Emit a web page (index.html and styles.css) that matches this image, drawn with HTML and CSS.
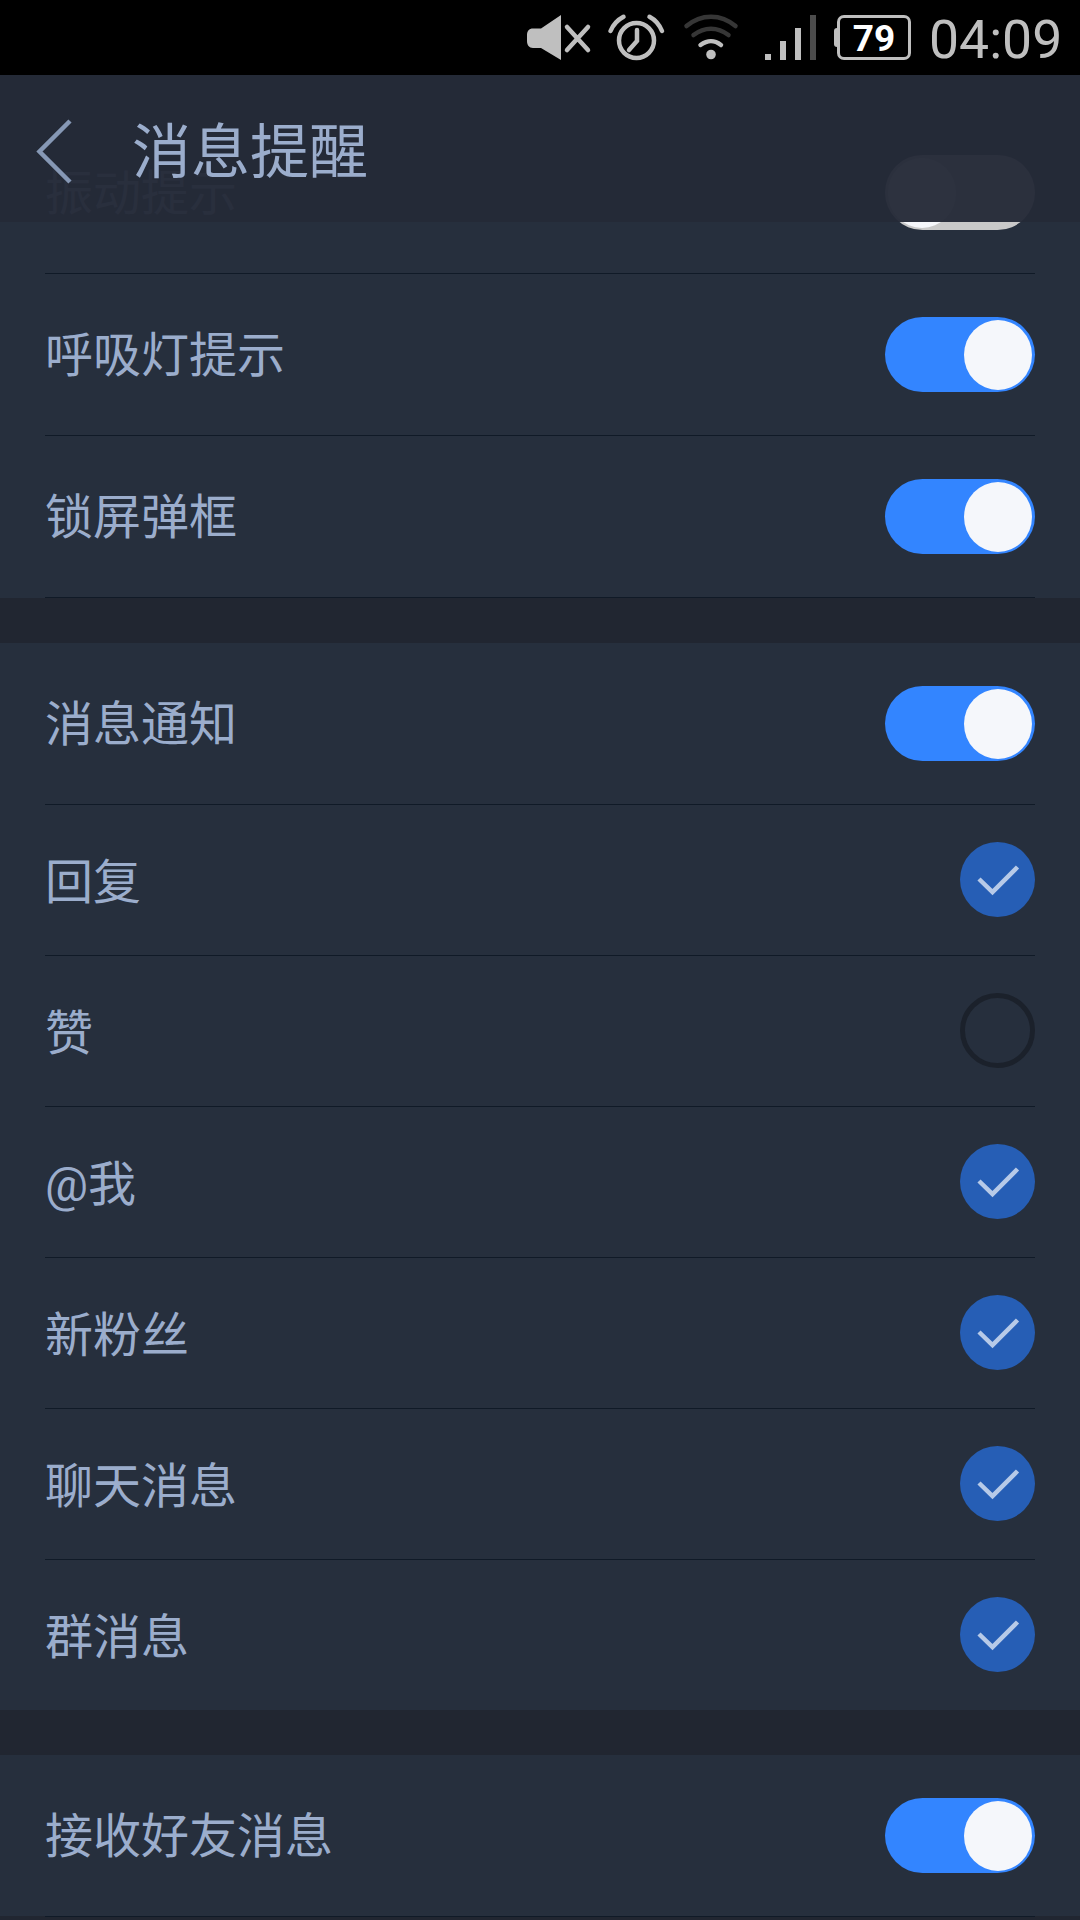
FILE: index.html
```
<!DOCTYPE html>
<html lang="zh-CN">
<head>
  <meta charset="utf-8">
  <title>消息提醒</title>
  <link rel="stylesheet" href="styles.css">
</head>
<body>
  <div class="status-bar">
    <svg class="status-icons" width="315" height="75" viewBox="0 0 315 75">
      <!-- muted -->
      <path class="fill" d="M23 28.500H31L51 15V60L31 48H23C19 48 17 45 17 41V35C17 31 19 28.500 23 28.500Z"/>
      <path class="line w4" d="M57 27L78 50M78 27L57 50"/>
      <!-- alarm -->
      <circle class="line w4" cx="126.500" cy="40.500" r="17.500"/>
      <path class="line w4" d="M127 30V41L119 50"/>
      <path class="line w4" d="M100.500 31C103 25 107.500 20 113.500 16.800M139.500 16.800C145.500 20 149.500 25 152 31"/>
      <!-- wifi -->
      <path class="line w4 dim" d="M176.500 26C191 13.500 211 13.500 225.500 26"/>
      <path class="line w4 dim" d="M183.500 35C194.500 26.500 207.500 26.500 218.500 35"/>
      <path class="line w4" d="M190.500 45C198 39.800 204 39.800 211 45"/>
      <circle class="fill" cx="201" cy="54.500" r="4.800"/>
      <!-- signal -->
      <path class="fill" d="M255 54H261V60H255ZM270 41H276V60H270ZM285 28H291V60H285Z"/>
      <path class="weak" d="M300 15H306V60H300Z"/>
    </svg>
    <div class="battery">79</div>
    <div class="clock">04:09</div>
  </div>

  <div class="screen">
    <header class="title-bar">
      <svg class="back" width="40" height="70" viewBox="0 0 40 70">
        <path d="M34 3L3.500 33.500L34 64"/>
      </svg>
      <h1>消息提醒</h1>
    </header>

    <main>
      <section class="group scrolled">
        <div class="row"><span>振动提示</span><i class="switch"></i></div>
        <div class="row"><span>呼吸灯提示</span><i class="switch on"></i></div>
        <div class="row"><span>锁屏弹框</span><i class="switch on"></i></div>
      </section>

      <section class="group">
        <div class="row"><span>消息通知</span><i class="switch on"></i></div>
        <div class="row small"><span>回复</span><svg class="check" viewBox="0 0 75 75"><circle cx="37.500" cy="37.500" r="37.500"/><path d="M19 37L32.500 50L57.500 25"/></svg></div>
        <div class="row small"><span>赞</span><i class="unchecked"></i></div>
        <div class="row small"><span>@我</span><svg class="check" viewBox="0 0 75 75"><circle cx="37.500" cy="37.500" r="37.500"/><path d="M19 37L32.500 50L57.500 25"/></svg></div>
        <div class="row small"><span>新粉丝</span><svg class="check" viewBox="0 0 75 75"><circle cx="37.500" cy="37.500" r="37.500"/><path d="M19 37L32.500 50L57.500 25"/></svg></div>
        <div class="row small"><span>聊天消息</span><svg class="check" viewBox="0 0 75 75"><circle cx="37.500" cy="37.500" r="37.500"/><path d="M19 37L32.500 50L57.500 25"/></svg></div>
        <div class="row small last"><span>群消息</span><svg class="check" viewBox="0 0 75 75"><circle cx="37.500" cy="37.500" r="37.500"/><path d="M19 37L32.500 50L57.500 25"/></svg></div>
      </section>

      <section class="group tail">
        <div class="row"><span>接收好友消息</span><i class="switch on"></i></div>
      </section>
    </main>
  </div>
</body>
</html>
```
FILE: styles.css
```
:root {
  --page-color: #212631;
  --row-color: #262f3d;
  --bar-color: rgba(36, 42, 55, 0.96);
  --line-color: #101a27;
  --font-color: #9badcc;
  --status-color: #bfbfbf;
  --blue: #3385ff;
}

* {
  box-sizing: border-box;
}

body {
  margin: 0;
  height: 1920px;
  overflow: hidden;
  background-color: var(--page-color);
  color: var(--font-color);
  font-family: Roboto, "Noto Sans CJK SC", sans-serif;
}

.status-bar {
  height: 75px;
  padding-left: 510px;
  display: flex;
  align-items: center;
  background-color: #000;
  color: var(--status-color);
}

.status-icons {
  display: block;
}

.fill {
  fill: #bfbfbf;
}

.weak {
  fill: #4c4c4c;
}

.line {
  fill: none;
  stroke: #bfbfbf;
  stroke-linecap: round;
}

.w4 {
  stroke-width: 4.5;
}

.dim {
  stroke: #363636;
}

.battery {
  position: relative;
  width: 74px;
  height: 45px;
  margin-left: 12px;
  border: 3px solid var(--status-color);
  border-radius: 7px;
  color: #fff;
  font-size: 37px;
  font-weight: bold;
  line-height: 41px;
  text-align: center;
}

.battery::before {
  content: "";
  position: absolute;
  left: -6px;
  top: 10px;
  width: 4px;
  height: 19px;
  border-radius: 3px 0 0 3px;
  background-color: var(--status-color);
}

.clock {
  margin-left: 18px;
  padding-top: 4px;
  font-size: 53.5px;
  line-height: 71px;
}

.screen {
  position: relative;
}

.title-bar {
  position: absolute;
  z-index: 1;
  top: 0;
  left: 0;
  width: 100%;
  height: 147px;
  padding-left: 36px;
  display: flex;
  align-items: center;
  background-color: var(--bar-color);
}

.back {
  display: block;
  margin-top: 9px;
  fill: none;
  stroke: #8698b5;
  stroke-width: 4.5;
}

.title-bar h1 {
  margin: 0 0 0 56px;
  padding-top: 8px;
  font-size: 59px;
  font-weight: normal;
  line-height: 80px;
}

.group {
  margin-bottom: 45px;
  padding: 0 45px;
  background-color: var(--row-color);
}

.scrolled {
  padding-top: 37px;
}

.tail {
  height: 161px;
}

.row {
  height: 162px;
  display: flex;
  align-items: center;
  justify-content: space-between;
  border-bottom: 1px solid var(--line-color);
  font-size: 48px;
  line-height: 66px;
}

.row span {
  padding-top: 2px;
}

.small {
  height: 151px;
  padding-bottom: 1px;
}

.small span {
  padding-top: 6px;
}

.last {
  height: 150px;
  border-bottom: none;
}

.switch {
  width: 150px;
  height: 75px;
  padding: 2.5px 3px;
  display: flex;
  border-radius: 38px;
  background-color: #c9c9c9;
}

.switch::after {
  content: "";
  width: 68px;
  height: 70px;
  border-radius: 50%;
  background-color: #f5f7fb;
}

.switch.on {
  justify-content: flex-end;
  background-color: var(--blue);
}

.check {
  width: 75px;
  height: 75px;
}

.check circle {
  fill: #265eb5;
}

.check path {
  fill: none;
  stroke: #b7cae8;
  stroke-width: 4.5;
}

.unchecked {
  width: 75px;
  height: 75px;
  border: 5px solid #1b212b;
  border-radius: 50%;
}
```
